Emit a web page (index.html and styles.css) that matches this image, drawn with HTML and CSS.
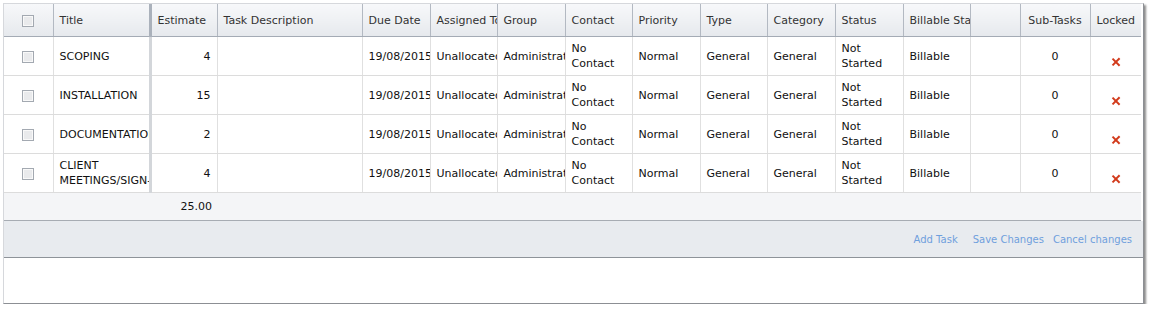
FILE: index.html
```html
<!DOCTYPE html>
<html lang="en">
<head>
    <meta charset="UTF-8">
    <title>Tasks</title>
    <link rel="stylesheet" href="styles.css">
</head>
<body>

    <div class="grid-panel">
        <table class="task-grid">
            <colgroup>
                <col style="width:49px"><col style="width:97px"><col style="width:67px"><col style="width:145px">
                <col style="width:68px"><col style="width:67px"><col style="width:68px"><col style="width:67px">
                <col style="width:68px"><col style="width:67px"><col style="width:68px"><col style="width:68px">
                <col style="width:67px"><col style="width:50px"><col style="width:70px"><col style="width:51px">
            </colgroup>
            <thead>
                <tr>
                    <th class="check-cell"><span class="check"></span></th>
                    <th class="frozen">Title</th>
                    <th>Estimate</th>
                    <th>Task Description</th>
                    <th>Due Date</th>
                    <th>Assigned To</th>
                    <th>Group</th>
                    <th>Contact</th>
                    <th>Priority</th>
                    <th>Type</th>
                    <th>Category</th>
                    <th>Status</th>
                    <th>Billable Status</th>
                    <th></th>
                    <th class="center">Sub-Tasks</th>
                    <th>Locked</th>
                </tr>
            </thead>
            <tbody>
                <tr>
                    <td class="check-cell"><span class="check"></span></td>
                    <td class="frozen">SCOPING</td>
                    <td class="num">4</td>
                    <td></td>
                    <td class="nowrap">19/08/2015</td>
                    <td class="nowrap">Unallocated</td>
                    <td class="nowrap">Administration</td>
                    <td>No Contact</td>
                    <td>Normal</td>
                    <td>General</td>
                    <td>General</td>
                    <td>Not Started</td>
                    <td>Billable</td>
                    <td></td>
                    <td class="center">0</td>
                    <td class="center"><span class="cross"></span></td>
                </tr>
                <tr>
                    <td class="check-cell"><span class="check"></span></td>
                    <td class="frozen">INSTALLATION</td>
                    <td class="num">15</td>
                    <td></td>
                    <td class="nowrap">19/08/2015</td>
                    <td class="nowrap">Unallocated</td>
                    <td class="nowrap">Administration</td>
                    <td>No Contact</td>
                    <td>Normal</td>
                    <td>General</td>
                    <td>General</td>
                    <td>Not Started</td>
                    <td>Billable</td>
                    <td></td>
                    <td class="center">0</td>
                    <td class="center"><span class="cross"></span></td>
                </tr>
                <tr>
                    <td class="check-cell"><span class="check"></span></td>
                    <td class="frozen nowrap">DOCUMENTATION</td>
                    <td class="num">2</td>
                    <td></td>
                    <td class="nowrap">19/08/2015</td>
                    <td class="nowrap">Unallocated</td>
                    <td class="nowrap">Administration</td>
                    <td>No Contact</td>
                    <td>Normal</td>
                    <td>General</td>
                    <td>General</td>
                    <td>Not Started</td>
                    <td>Billable</td>
                    <td></td>
                    <td class="center">0</td>
                    <td class="center"><span class="cross"></span></td>
                </tr>
                <tr>
                    <td class="check-cell"><span class="check"></span></td>
                    <td class="frozen nowrap">CLIENT<br>MEETINGS/SIGN-OFF</td>
                    <td class="num">4</td>
                    <td></td>
                    <td class="nowrap">19/08/2015</td>
                    <td class="nowrap">Unallocated</td>
                    <td class="nowrap">Administration</td>
                    <td>No Contact</td>
                    <td>Normal</td>
                    <td>General</td>
                    <td>General</td>
                    <td>Not Started</td>
                    <td>Billable</td>
                    <td></td>
                    <td class="center">0</td>
                    <td class="center"><span class="cross"></span></td>
                </tr>
            </tbody>
            <tfoot>
                <tr>
                    <td colspan="2"></td>
                    <td class="num">25.00</td>
                    <td colspan="13"></td>
                </tr>
            </tfoot>
        </table>
        <div class="toolbar">
            <a href="#" class="add-link">Add Task</a>
            <a href="#" class="save-link">Save Changes</a>
            <a href="#" class="cancel-link">Cancel changes</a>
        </div>
        <div class="empty-area"></div>
    </div>

</body>
</html>
```

FILE: styles.css
```css
body {
    margin: 0;
    background: #ffffff;
    font-family: "DejaVu Sans", Verdana, sans-serif;
    font-size: 11px;
    color: #111111;
}
.grid-panel {
    margin: 3px 0 0 3px;
    width: 1139px;
    background: #ffffff;
    border: 1px solid #d6d8dc;
    border-right-color: #8c8f94;
    border-bottom-color: #8c8f94;
    box-shadow: 2px 2px 2px rgba(0, 0, 0, 0.45);
}
.task-grid {
    width: 1137px;
    border-collapse: collapse;
    table-layout: fixed;
}
.task-grid th {
    height: 32px;
    padding: 0 6px;
    text-align: left;
    font-weight: normal;
    color: #333333;
    white-space: nowrap;
    overflow: hidden;
    background: linear-gradient(#f7f8fa, #e6e9ed);
    border-left: 1px solid #b3b9c2;
    border-bottom: 1px solid #a4abb5;
}
.task-grid th:first-child {
    border-left: none;
}
.task-grid td {
    height: 38px;
    padding: 0 6px;
    line-height: 15px;
    overflow: hidden;
    border-left: 1px solid #e0e0e0;
    border-bottom: 1px solid #dcdcdc;
}
.task-grid td:first-child {
    border-left: none;
}
.task-grid .frozen + th,
.task-grid .frozen + td {
    border-left: 3px solid #d3d6da;
}
.task-grid thead .frozen + th {
    border-left: 3px solid #aab1bb;
}
.task-grid .check-cell {
    text-align: center;
    padding: 0;
}
.check {
    display: inline-block;
    width: 10px;
    height: 10px;
    border: 1px solid #a3a9b1;
    background: #e9eaec;
    box-shadow: inset 0 0 0 1px #f9f9f9;
    vertical-align: middle;
}
.task-grid .num {
    text-align: right;
}
.task-grid .center {
    text-align: center;
}
.task-grid .nowrap {
    white-space: nowrap;
}
.cross {
    display: inline-block;
    position: relative;
    width: 8px;
    height: 8px;
    top: 6px;
}
.cross::before,
.cross::after {
    content: "";
    position: absolute;
    left: 3px;
    top: -1px;
    width: 2.4px;
    height: 10px;
    background: #d23b1c;
    transform: rotate(45deg);
}
.cross::after {
    transform: rotate(-45deg);
}
.task-grid tfoot td {
    height: 27px;
    background: #f4f5f7;
    border-left: none;
    border-bottom: 1px solid #a7acb3;
}
.task-grid tfoot td.num {
    padding-right: 5px;
}
.toolbar {
    display: flex;
    justify-content: flex-end;
    align-items: center;
    height: 36px;
    padding-right: 11px;
    background: #e8ebef;
    border-bottom: 1px solid #8e9399;
}
.toolbar a {
    font-size: 10px;
    color: #6f9fdd;
    text-decoration: none;
}
.save-link {
    margin-left: 15px;
}
.cancel-link {
    margin-left: 9px;
}
.empty-area {
    height: 45px;
}
```
